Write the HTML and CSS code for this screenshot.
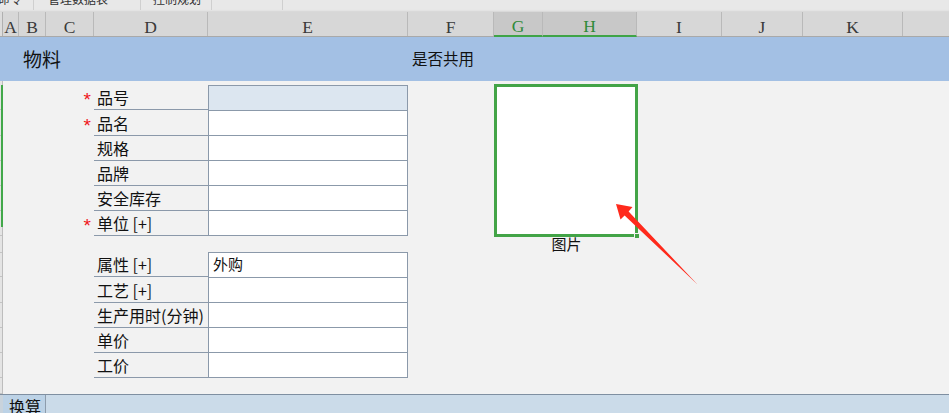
FILE: index.html
```html
<!DOCTYPE html>
<html lang="zh">
<head>
<meta charset="utf-8">
<title>物料</title>
<link rel="stylesheet" href="styles.css">
</head>
<body>
<div class="page">
  <div class="toolbar">
    <div class="tb-item tb-1"><span>命令</span></div>
    <div class="tb-item tb-2"><span>管理数据表</span></div>
    <div class="tb-item tb-3"><span>控制规划</span></div>
    <div class="tb-item tb-4"></div>
  </div>

  <div class="colhead">
    <div class="ch corner"></div>
    <div class="ch">A</div>
    <div class="ch">B</div>
    <div class="ch">C</div>
    <div class="ch">D</div>
    <div class="ch">E</div>
    <div class="ch">F</div>
    <div class="ch sel">G</div>
    <div class="ch sel">H</div>
    <div class="ch">I</div>
    <div class="ch">J</div>
    <div class="ch">K</div>
    <div class="ch last"></div>
  </div>

  <div class="band">
    <div class="band-title">物料</div>
    <div class="band-share">是否共用</div>
  </div>

  <div class="body">
    <div class="strip">
      <div class="rh" style="height:29px"></div>
      <div class="rh" style="height:26px"></div>
      <div class="rh" style="height:25px"></div>
      <div class="rh" style="height:25px"></div>
      <div class="rh" style="height:25px"></div>
      <div class="rh" style="height:25px"></div>
      <div class="rh" style="height:17px"></div>
      <div class="rh" style="height:24px"></div>
      <div class="rh" style="height:26px"></div>
      <div class="rh" style="height:25px"></div>
      <div class="rh" style="height:25px"></div>
      <div class="rh" style="height:25px"></div>
      <div class="rh" style="height:16px"></div>
      <div class="rowsel"></div>
    </div>

    <div class="main">
      <div class="forms">
        <div class="form">
          <div class="req">*</div><div class="lab">品号</div><div class="val first key"></div>
          <div class="req">*</div><div class="lab">品名</div><div class="val"></div>
          <div class="req"></div><div class="lab">规格</div><div class="val"></div>
          <div class="req"></div><div class="lab">品牌</div><div class="val"></div>
          <div class="req"></div><div class="lab">安全库存</div><div class="val"></div>
          <div class="req">*</div><div class="lab">单位 [+]</div><div class="val"></div>
        </div>
        <div class="form form2">
          <div class="req"></div><div class="lab">属性 [+]</div><div class="val first">外购</div>
          <div class="req"></div><div class="lab">工艺 [+]</div><div class="val"></div>
          <div class="req"></div><div class="lab">生产用时(分钟)</div><div class="val"></div>
          <div class="req"></div><div class="lab">单价</div><div class="val"></div>
          <div class="req"></div><div class="lab">工价</div><div class="val"></div>
        </div>
      </div>

      <div class="picture">
        <div class="pic-box"><div class="handle"></div></div>
        <div class="pic-cap">图片</div>
      </div>
    </div>
  </div>

  <div class="tabs">
    <div class="tab-strip"></div>
    <div class="tab">换算</div>
  </div>

  <svg class="arrow" width="949" height="413" viewBox="0 0 949 413">
    <polygon points="616,204 632.5,207 628.6,211.4 697.5,284.5 624.6,215.4 620.5,219.5" fill="#ff2a1c"/>
  </svg>
</div>
</body>
</html>
```

FILE: styles.css
```css
* { box-sizing: border-box; }
html, body { margin: 0; padding: 0; }
body {
  width: 949px;
  height: 413px;
  overflow: hidden;
  background: #f2f2f2;
  font-family: "Noto Sans CJK SC", "Noto Sans", sans-serif;
  color: #111;
}
.page {
  position: relative;
  width: 949px;
  height: 413px;
  overflow: hidden;
}

/* toolbar remnants at the very top */
.toolbar {
  display: flex;
  height: 12px;
  background: #e8e8e8;
  overflow: hidden;
  box-shadow: inset 0 -2px 2px -1px #d4d4d4;
}
.tb-item {
  height: 10px;
  border-right: 1px solid #cfcfcf;
  font-size: 12px;
  line-height: 12px;
  color: #333;
}
.tb-item span { display: block; margin-top: -7px; white-space: nowrap; }
.tb-1 { width: 34px; padding-left: 0; }
.tb-1 span { margin-left: -2px; }
.tb-2 { width: 107px; padding-left: 14px; }
.tb-3 { width: 71px; padding-left: 12px; }
.tb-4 { width: 71px; }

/* column header */
.colhead {
  display: grid;
  grid-template-columns: 3px 16px 27px 48px 114px 200px 86px 49px 94px 85px 81px 100px 46px;
  height: 25px;
  background: #d7d7d7;
  border-bottom: 1px solid #a9a9a9;
}
.ch {
  display: flex;
  align-items: flex-end;
  justify-content: center;
  border-right: 1px solid #b9b9b9;
  font-family: "Liberation Serif", "DejaVu Serif", serif;
  font-size: 17.5px;
  line-height: 18px;
  color: #3a3a3a;
}
.ch.corner { border-right: 1px solid #b0b0b0; background: #dcdcdc; }
.ch.last { border-right: none; }
.ch.sel {
  background: #c8c8c8;
  color: #2f8a3a;
  border-bottom: 2px solid #3fa447;
  margin-bottom: -1px;
  line-height: 17px;
}

/* blue title band */
.band {
  display: grid;
  grid-template-columns: 408px 541px;
  height: 44px;
  background: #a3c0e4;
  align-items: center;
}
.band-title {
  padding-left: 23px;
  font-size: 19px;
  line-height: 22px;
}
.band-share {
  padding-left: 4px;
  font-size: 15.5px;
  line-height: 20px;
  margin-top: -3px;
}

/* sheet body */
.body {
  display: flex;
  height: 313px;
}
.strip {
  position: relative;
  width: 3px;
  flex: none;
  background: #e4e4e4;
  border-right: 1px solid #bdbdbd;
}
.rh { border-bottom: 1px solid #c4c4c4; }
.rowsel {
  position: absolute;
  left: 1px;
  top: 4px;
  width: 2px;
  height: 142px;
  background: #42a84a;
}
.main {
  display: flex;
  flex: 1;
}
.forms {
  width: 405px;
  padding-top: 4px;
  display: flex;
  flex-direction: column;
  gap: 16px;
}
.form {
  display: grid;
  grid-template-columns: 91px 114px 200px;
  grid-auto-rows: auto;
}
.req {
  color: #f0141a;
  font-size: 19px;
  line-height: 19px;
  text-align: right;
  padding-right: 3px;
  padding-top: 5px;
  font-family: "Liberation Sans", sans-serif;
}
.lab {
  height: 25px;
  border-bottom: 1px solid #8b99aa;
  padding-left: 3px;
  font-size: 16px;
  line-height: 22px;
  white-space: nowrap;
  display: flex;
  align-items: flex-end;
  padding-bottom: 1px;
}
.val {
  height: 25px;
  background: #fff;
  border: 1px solid #8b99aa;
  border-top: none;
  padding-left: 4px;
  font-size: 15px;
  line-height: 22px;
}
.val.first { border-top: 1px solid #8b99aa; height: 26px; }
.val.key { background: #dce6f0; }

.picture {
  margin-left: 86px;
  padding-top: 3px;
  width: 144px;
  display: flex;
  flex-direction: column;
  align-items: center;
}
.pic-box {
  position: relative;
  width: 144px;
  height: 153px;
  background: #fff;
  border: 3px solid #43a447;
}
.handle {
  position: absolute;
  right: -5px;
  bottom: -5px;
  width: 6px;
  height: 6px;
  background: #43a447;
  border: 1px solid #f2f2f2;
}
.pic-cap {
  font-size: 15px;
  line-height: 16px;
  margin-top: -1px;
  padding-left: 1px;
}

/* bottom sheet tabs */
.tabs {
  display: flex;
  height: 19px;
  border-top: 1px solid #7f8fa1;
  background: #cbdbe9;
  overflow: hidden;
}
.tab-strip {
  width: 3px;
  background: #c9d3dc;
}
.tab {
  width: 43px;
  background: #bcd2e6;
  border-right: 1px solid #8d9cac;
  padding-left: 6px;
  font-size: 16px;
  line-height: 20px;
  padding-top: 1px;
}

.arrow {
  position: absolute;
  left: 0;
  top: 0;
  pointer-events: none;
}
```
